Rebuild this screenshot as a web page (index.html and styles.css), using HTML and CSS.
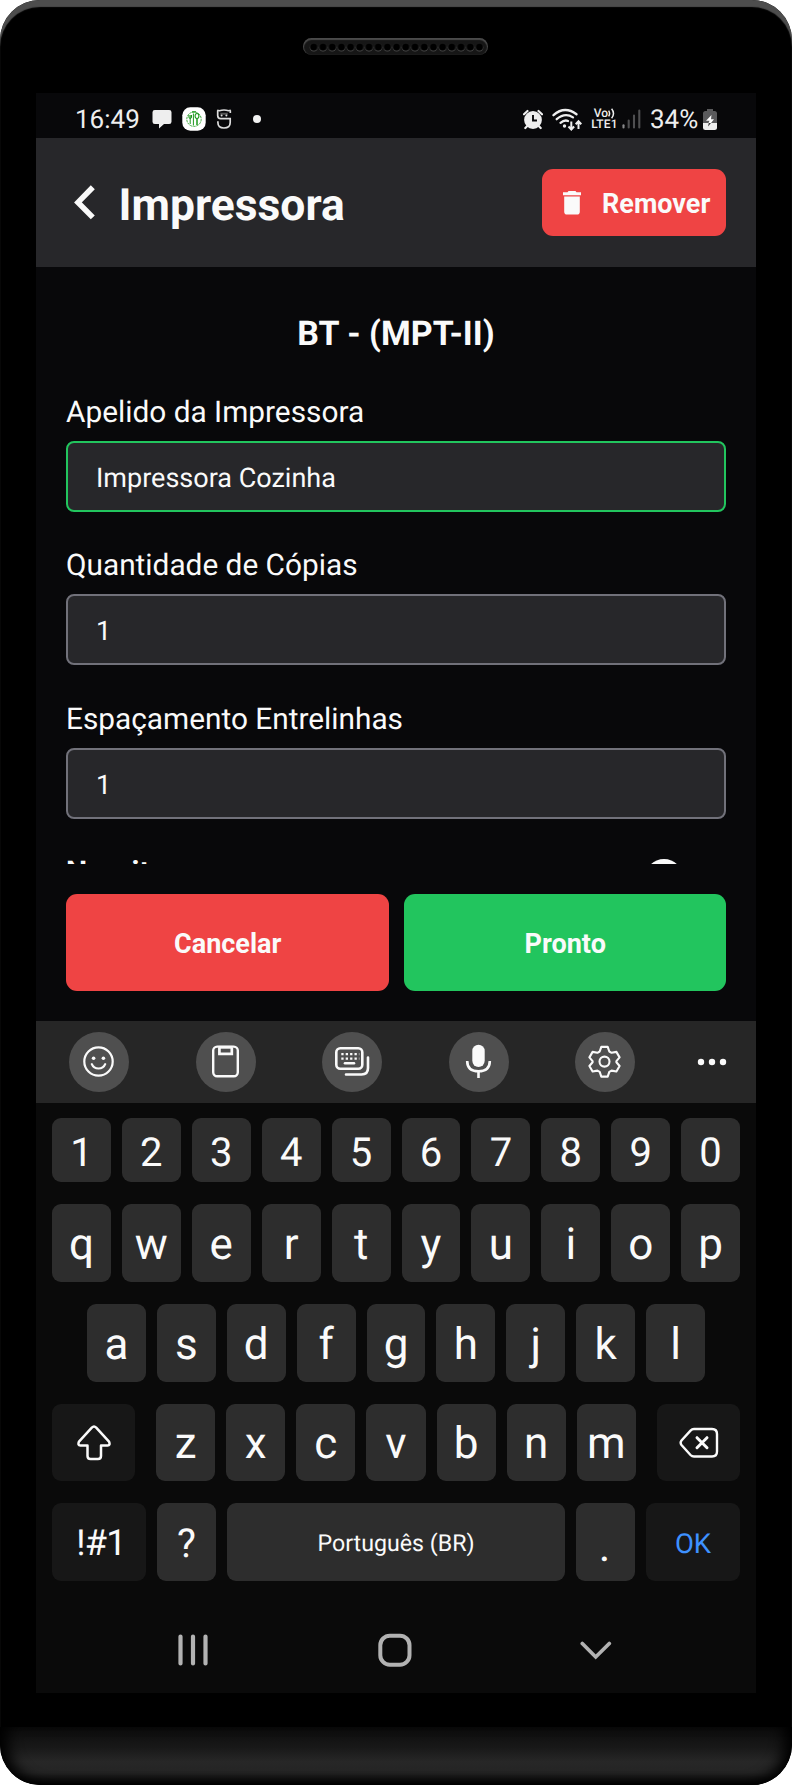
FILE: index.html
```html
<!DOCTYPE html>
<html lang="pt-BR">
<head>
<meta charset="utf-8">
<title>Impressora</title>
<link rel="stylesheet" href="styles.css">
</head>
<body>
<div class="phone">
  <div class="bezel-top">
    <div class="speaker">
      <svg width="185" height="17" viewBox="0 0 185 17">
        <defs>
          <pattern id="hole" x="6.2" y="0" width="9.2" height="17" patternUnits="userSpaceOnUse">
            <circle cx="4.6" cy="9.4" r="4" fill="#4a4a4a"/>
            <circle cx="4.6" cy="8.7" r="4" fill="#161616"/>
            <circle cx="4.6" cy="9" r="3.2" fill="#000"/>
          </pattern>
        </defs>
        <rect x="6.2" y="0" width="174.8" height="17" fill="url(#hole)"/>
      </svg>
    </div>
  </div>

  <div class="screen">
    <div class="status">
      <span class="clock">16:49</span>
      <svg class="ic-chat" width="20" height="20" viewBox="0 0 20 20"><path fill="#eee" d="M2.800 1h14.400q2.300 0 2.300 2.300v9.500q0 2.300-2.300 2.300H12L7 19.600V15.100H2.800Q.5 15.100.5 12.800V3.300Q.5 1 2.800 1z"/></svg>
      <svg class="ic-app" width="24" height="24" viewBox="0 0 24 24">
        <rect x=".3" y=".3" width="23.400" height="23.400" rx="8" fill="#fff"/>
        <circle cx="12" cy="12.200" r="7.200" fill="none" stroke="#2fa32f" stroke-width=".9" stroke-dasharray="2.400 .8"/>
        <path d="M10 4.800h4" stroke="#1c981c" stroke-width="1.200"/>
        <path d="M6.900 8v2q0 1.500 1.300 1.500T9.500 10V8M8.200 8V17M11.400 6.500v12" fill="none" stroke="#1c981c" stroke-width="1"/>
        <ellipse cx="15" cy="9" rx="1.900" ry="2.500" fill="none" stroke="#1c981c" stroke-width="1.100"/>
        <path d="M15 11.500V18" stroke="#1c981c" stroke-width="1.500"/>
      </svg>
      <svg class="ic-s" width="16" height="22" viewBox="0 0 16 22">
        <path d="M14.300 5V2.500M1.700 2.500V7.500Q1.700 10.700 4.700 10.700H14.200V14.500Q14.200 20 8 20Q1.900 20 1.900 14.500V13.300" fill="none" stroke="#ddd" stroke-width="1.700"/>
        <path d="M1.200 2.200 3.500 2.800Q8 1 12.500 2.800L14.800 2.200" fill="none" stroke="#ddd" stroke-width="1.500"/>
        <path d="M4.300 5.800h7.500" stroke="#555" stroke-width="2"/>
        <circle cx="5.600" cy="7.400" r="1" fill="#ddd"/><circle cx="10.400" cy="7.400" r="1" fill="#ddd"/>
      </svg>
      <svg class="ic-dot" width="8" height="8" viewBox="0 0 8 8"><circle cx="4" cy="4" r="4" fill="#f2f2f2"/></svg>
      <span class="spring"></span>
      <svg class="ic-alarm" width="20" height="21" viewBox="0 0 20 21">
        <circle cx="10" cy="11" r="8.900" fill="#eee"/>
        <path d="M1 5.300 4.500 2M19 5.300 15.500 2M4 17.300 2.300 19M16 17.300l1.700 1.700" stroke="#eee" stroke-width="2.200" stroke-linecap="round"/>
        <path d="M10 6v5.500h4" fill="none" stroke="#08080a" stroke-width="1.900"/>
      </svg>
      <svg class="ic-wifi" width="30" height="23" viewBox="0 0 30 23">
        <g fill="none" stroke="#eee" stroke-width="2.300" stroke-linecap="round">
          <path d="M1.500 7.200Q12.500-2.600 24.500 6.200"/>
          <path d="M4.700 11.200Q13 4.200 21 9.400"/>
          <path d="M8.500 14.800Q12.500 11.500 16 13"/>
        </g>
        <circle cx="12.500" cy="18" r="1.700" fill="#eee"/>
        <path d="M19.300 13.500v7.500M16.500 18.500l2.800 3 2.800-3M26.500 21v-7.500M23.700 16.200l2.800-3 2.800 3" fill="none" stroke="#eee" stroke-width="2"/>
      </svg>
      <div class="volte">
        <span class="vo">Vo<svg width="7" height="11" viewBox="0 0 7 11"><path d="M.6 2.600Q2.600 5.500.6 8.400M3.600.8Q7.400 5.500 3.600 10.200" fill="none" stroke="#eee" stroke-width="1.500"/></svg></span>
        <span class="lte">LTE1</span>
      </div>
      <svg class="ic-signal" width="20" height="20" viewBox="0 0 20 20">
        <g stroke-width="2.100" stroke-linecap="round" stroke="#4f4f51"><path d="M1.500 16.200V18.500" stroke="#8a8a8c"/><path d="M6.700 11.500v7M12 6.500v12M17.300 1.500v17"/></g>
      </svg>
      <span class="pct">34%</span>
      <svg class="ic-batt" width="14" height="21" viewBox="0 0 14 21">
        <path d="M4 0h6v2h1.500Q14 2 14 4.500V15H0V4.500Q0 2 2.500 2H4z" fill="#5a5a5c"/>
        <path d="M0 14h14v4.500Q14 21 11.500 21h-9Q0 21 0 18.500z" fill="#eee"/>
        <path d="M8.500 6 3 11.800h3.500L5.500 14h2.500L11 10.200H8z" fill="#fff"/>
        <path d="M8 14 5 17.500 5.800 14z" fill="#333"/>
      </svg>
    </div>

    <header class="header">
      <svg class="back" width="22" height="35" viewBox="0 0 22 35"><path d="M18.800 2.200 4 17.400l14.800 15" fill="none" stroke="#fafafa" stroke-width="5.600"/></svg>
      <h1 class="title">Impressora</h1>
      <button class="remove">
        <svg width="18" height="24" viewBox="0 0 18 24"><path fill="#fafafa" d="M5.500 0h7l1 1.200H18v3H0v-3h4.500zM1.200 5.400h15.600v15.300q0 2.800-2.800 2.800H4q-2.800 0-2.800-2.800z"/></svg>
        <span>Remover</span>
      </button>
    </header>

    <main class="content">
      <h2 class="device">BT - (MPT-II)</h2>
      <div class="field"><label>Apelido da Impressora</label><div class="input focus">Impressora Cozinha</div></div>
      <div class="field"><label>Quantidade de Cópias</label><div class="input">1</div></div>
      <div class="field"><label>Espaçamento Entrelinhas</label><div class="input">1</div></div>
      <div class="option"><b>Negrito</b><span class="thumb"></span></div>
    </main>

    <div class="actions">
      <button class="btn red">Cancelar</button>
      <button class="btn green">Pronto</button>
    </div>

    <div class="toolbar">
      <div class="tool"><svg width="60" height="60" viewBox="0 0 60 60"><g fill="none" stroke="#fafafa" stroke-width="2.200" stroke-linecap="round"><circle cx="29.500" cy="29.500" r="14.200"/><path d="M22.800 32.200Q24.600 36.500 29.500 36.500T36.200 32.200"/></g><circle cx="24.600" cy="26.300" r="1.800" fill="#fafafa"/><circle cx="34.400" cy="26.300" r="1.800" fill="#fafafa"/></svg></div>
      <div class="tool"><svg width="60" height="60" viewBox="0 0 60 60"><g fill="none" stroke="#fafafa" stroke-width="2.400"><rect x="17.200" y="14.600" width="24.600" height="29.600" rx="4"/><path d="M23.400 15.500v6.300h12.400V15.500" stroke-width="2.700"/><path d="M22.500 15.300h14" stroke-width="2.800"/></g></svg></div>
      <div class="tool"><svg width="60" height="60" viewBox="0 0 60 60"><g fill="none" stroke="#fafafa" stroke-width="2.600" stroke-linecap="round"><rect x="14.300" y="16.200" width="26" height="20.600" rx="4"/><path d="M46 25.500V36q0 6.500-6.500 6.500H24"/><path d="M23 31.300h9"/></g><path d="M19.300 22.200h18M19.300 26.600h18" stroke="#fafafa" stroke-width="2.300" stroke-dasharray="2.300 2.100"/></svg></div>
      <div class="tool"><svg width="60" height="60" viewBox="0 0 60 60"><rect x="23.300" y="12.700" width="12.400" height="22.300" rx="6.200" fill="#fafafa"/><path d="M18.200 29q0 10.300 11.300 10.300T40.800 29M29.500 39v7" fill="none" stroke="#fafafa" stroke-width="2.600"/></svg></div>
      <div class="tool"><svg width="60" height="60" viewBox="0 0 60 60"><g fill="none" stroke="#fafafa" stroke-width="2.100" stroke-linejoin="round"><path d="M26.300 14.900h6.400l1.600 4.600 2.300 1.300 4.800-.9 3.200 5.500-3.200 3.700v1.200l3.200 3.700-3.200 5.500-4.800-.9-2.300 1.300-1.600 4.700h-6.400l-1.600-4.700-2.300-1.300-4.800.9-3.200-5.500 3.200-3.700v-1.200l-3.200-3.700 3.200-5.500 4.800.9 2.300-1.300z"/><circle cx="29.500" cy="29.600" r="5"/></g></svg></div>
      <svg class="more" width="30" height="8" viewBox="0 0 30 8"><g fill="#fafafa"><circle cx="4" cy="4" r="3.200"/><circle cx="15" cy="4" r="3.200"/><circle cx="26" cy="4" r="3.200"/></g></svg>
    </div>

    <div class="keyboard">
      <div class="row digits"><div class="key">1</div><div class="key">2</div><div class="key">3</div><div class="key">4</div><div class="key">5</div><div class="key">6</div><div class="key">7</div><div class="key">8</div><div class="key">9</div><div class="key">0</div></div>
      <div class="row"><div class="key">q</div><div class="key">w</div><div class="key">e</div><div class="key">r</div><div class="key">t</div><div class="key">y</div><div class="key">u</div><div class="key">i</div><div class="key">o</div><div class="key">p</div></div>
      <div class="row inset"><div class="key">a</div><div class="key">s</div><div class="key">d</div><div class="key">f</div><div class="key">g</div><div class="key">h</div><div class="key">j</div><div class="key">k</div><div class="key">l</div></div>
      <div class="row shift-row">
        <div class="key dark side"><svg width="34" height="36" viewBox="0 0 34 36"><path d="M14.800 2.600Q17 .4 19.200 2.600L32 16.600Q33.600 20.400 30.500 20.600H24V31Q24 34 21 34H13.500Q10.500 34 10.500 31V20.600H3.500Q.4 20.400 2 16.600z" fill="none" stroke="#fafafa" stroke-width="2.500" stroke-linejoin="round"/></svg></div>
        <div class="letters"><div class="key">z</div><div class="key">x</div><div class="key">c</div><div class="key">v</div><div class="key">b</div><div class="key">n</div><div class="key">m</div></div>
        <div class="key dark side"><svg width="40" height="32" viewBox="0 0 40 32"><path d="M15 2H33Q38 2 38 7V24.500Q38 29.500 33 29.500H15Q13 29.500 11.500 28L2.500 18Q.8 15.800 2.500 13.500L11.500 3.600Q13 2 15 2z" fill="none" stroke="#fafafa" stroke-width="2.400"/><path d="M18 10.700l10 10M28 10.700l-10 10" stroke="#fafafa" stroke-width="3" stroke-linecap="round"/></svg></div>
      </div>
      <div class="row last">
        <div class="key dark sym">!#1</div><div class="key one quest">?</div><div class="key space">Português (BR)</div><div class="key one dot">.</div><div class="key dark ok">OK</div>
      </div>
    </div>

    <nav class="nav">
      <svg width="32" height="34" viewBox="0 0 32 34"><path d="M3.500 3.500v27M16 3.500v27M28.500 3.500v27" stroke="#b2b2b2" stroke-width="4.200" stroke-linecap="round"/></svg>
      <svg width="34" height="34" viewBox="0 0 34 34"><rect x="2.300" y="2.700" width="29.200" height="29" rx="9.500" fill="none" stroke="#b2b2b2" stroke-width="4"/></svg>
      <svg width="32" height="34" viewBox="0 0 32 34"><path d="M2.300 10.500 15.700 24 29.300 10.500" fill="none" stroke="#b2b2b2" stroke-width="3.700" stroke-linecap="round"/></svg>
    </nav>
  </div>
  <div class="bezel-gap"></div>
  <div class="bezel-bottom"></div>
</div>
</body>
</html>
```
FILE: styles.css
```css
* { box-sizing: border-box; }
body { margin: 0; background: #fff; font-family: Roboto, sans-serif; color: #fafafa; text-rendering: geometricPrecision; }
svg { display: block; flex: none; }
h1, h2 { margin: 0; }
button { border: 0; padding: 0; font: inherit; color: inherit; }

.phone { width: 792px; height: 1785px; background: #000; border-radius: 40px; overflow: hidden; box-shadow: inset 0 7px 1px #4d4d4d; display: flex; flex-direction: column; }
.bezel-top { height: 93px; flex: none; padding: 38px 1px 0 0; display: flex; justify-content: center; }
.speaker { width: 185px; height: 17px; border-radius: 8.500px; background: #161616; box-shadow: inset 0 1px 1px 1px #4a4a4a; overflow: hidden; }
.screen { width: 720px; height: 1600px; margin: 0 36px; flex: none; background: #08080a; display: flex; flex-direction: column; }
.bezel-gap { height: 34px; flex: none; }
.bezel-bottom { height: 58px; flex: none; border-radius: 0 0 40px 40px; background: linear-gradient(#0c0c0c, #181818 35%, #272727 60%, #242424 78%, #0a0a0a 96%, #000); box-shadow: inset 12px -2px 14px -4px #000, inset -12px -2px 14px -4px #000; }

.status { height: 45px; flex: none; padding: 7px 39px 0 39px; display: flex; align-items: center; color: #eee; }
.clock { font-size: 26px; line-height: 30px; width: 65px; white-space: nowrap; padding-top: 1px; }
.ic-chat { margin-left: 12px; }
.ic-app { margin-left: 9.500px; }
.ic-s { margin-left: 10.500px; }
.ic-dot { margin-left: 21px; }
.spring { flex: 1; }
.ic-wifi { margin-left: 9px; }
.volte { margin-left: 9px; width: 27px; display: flex; flex-direction: column; align-items: center; font-size: 12px; font-weight: 500; line-height: 11px; }
.vo { display: flex; align-items: center; }
.lte { letter-spacing: .2px; }
.ic-signal { margin-left: 4px; }
.pct { margin-left: 8px; width: 50px; font-size: 26px; line-height: 30px; white-space: nowrap; padding-top: 1px; }
.ic-batt { margin-left: 3px; }

.header { height: 129px; flex: none; background: #27272a; padding: 0 30px 0 38px; display: flex; align-items: center; }
.title { margin-left: 22.500px; padding-top: 4px; font-size: 44.400px; line-height: 52px; font-weight: 700; flex: 1; }
.remove { width: 184px; height: 67px; border-radius: 11px; background: #ef4444; display: flex; align-items: center; padding-left: 21px; font-size: 27px; font-weight: 700; line-height: 32px; }
.remove span { margin-left: 21px; padding-top: 2px; }

.content { height: 597px; flex: none; overflow: hidden; padding: 47px 30px 0; }
.device { font-size: 34px; line-height: 40px; font-weight: 700; text-align: center; margin-bottom: 39px; }
.field { margin-bottom: 33.330px; }
.field label { display: block; font-size: 29.800px; line-height: 40px; margin-bottom: 8px; }
.input { height: 71px; border: 2px solid #71717a; border-radius: 8px; background: #27272a; padding: 2px 28px 0; font-size: 27px; line-height: 66px; margin-bottom: 34.330px; }
.field { margin-bottom: 0; }
.input.focus { border-color: #22c55e; }
.option { display: flex; justify-content: space-between; align-items: flex-start; font-size: 30px; line-height: 40px; }
.thumb { width: 38px; height: 38px; border-radius: 50%; background: #fafafa; margin: 6px 43.500px 0 0; }

.actions { height: 157px; flex: none; padding: 30px; display: flex; gap: 15px; }
.btn { flex: 1; border-radius: 11px; font-size: 27px; font-weight: 700; line-height: 32px; padding: 2px 0 0 1px; }
.red { background: #ef4444; }
.green { background: #22c55e; }

.toolbar { height: 82px; flex: none; background: #262626; padding: 0 29px 0 33px; display: flex; align-items: center; gap: 66.500px; }
.tool { width: 60px; height: 60px; border-radius: 50%; background: #4f4f4f; flex: none; }
.more { margin-left: -5px; }

.keyboard { background: #0a0a0a; padding: 15px 16px 0; height: 478px; flex: none; display: flex; flex-direction: column; gap: 22px; }
.row, .letters { display: flex; gap: 11px; }
.row { height: 78px; flex: none; }
.key { flex: 1 1 0; min-width: 0; border-radius: 9px; background: #2d2d2d; display: flex; align-items: center; justify-content: center; font-size: 44px; line-height: 50px; padding-top: 2px; white-space: nowrap; }
.key.dark { background: #171717; }
.digits { height: 64px; }
.digits .key { font-size: 40px; padding-top: 5px; }
.inset { padding: 0 35px; }
.shift-row { height: 77px; gap: 21px; }
.letters { flex: 1; }
.letters .key { padding-top: 1px; }
.key.side { flex: none; width: 83px; padding-top: 0; }
.key.sym, .key.ok { flex: none; width: 94px; }
.key.sym { font-size: 36px; letter-spacing: -.8px; padding-left: 4px; }
.key.ok { font-size: 27.500px; color: #3e91ff; padding-top: 3px; }
.key.one { flex: none; width: 59px; }
.key.quest { font-size: 40px; padding-top: 4px; }
.key.dot { padding: 8px 2px 0 0; }
.key.space { font-size: 23.200px; padding-top: 2px; }

.nav { flex: 1; background: #0a0a0a; display: flex; justify-content: space-between; padding: 52px 144px 0 141px; align-items: flex-start; }
```
